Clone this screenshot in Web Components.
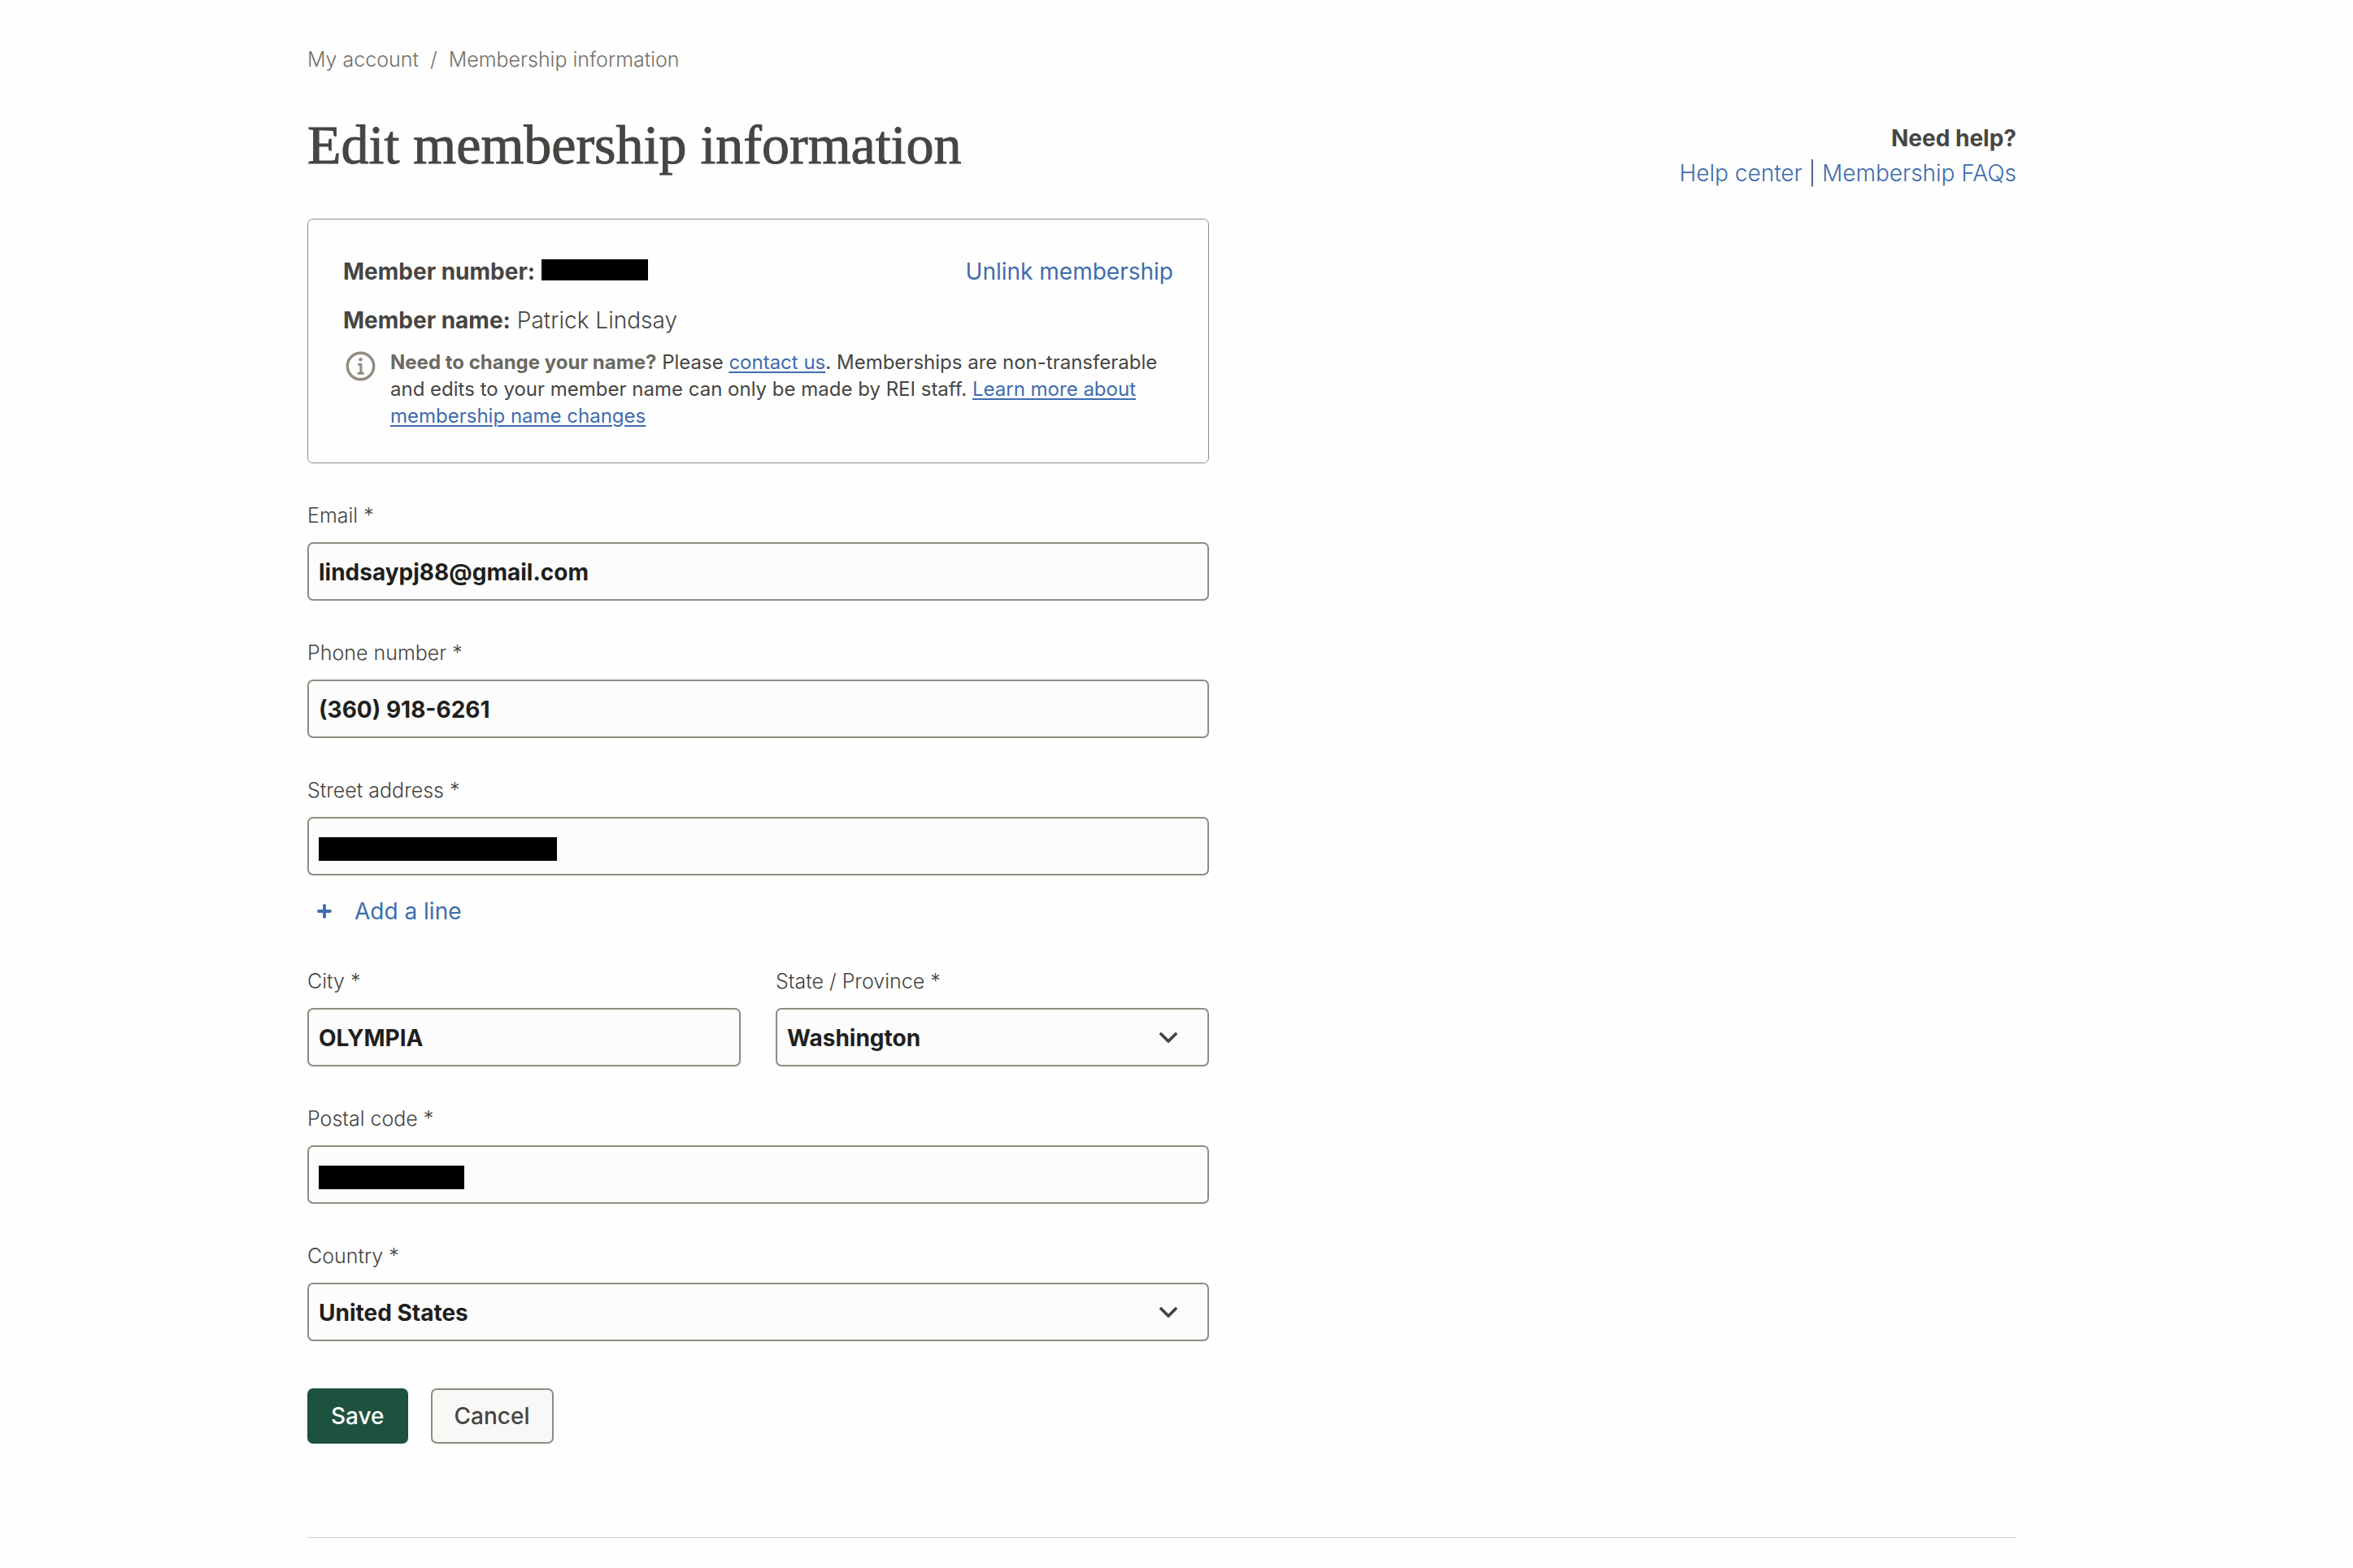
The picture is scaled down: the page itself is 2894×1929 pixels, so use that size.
<!DOCTYPE html>
<html lang="en">
<head>
<meta charset="utf-8">
<meta name="viewport" content="width=device-width, initial-scale=1">
<title>Edit membership information</title>
<style>
  :root {
    --sans: Inter, "Liberation Sans", sans-serif;
    --serif: "Liberation Serif", serif;
    --ink: #464542;
    --ink-strong: #1f1f1d;
    --muted: #73716a;
    --line: #928b80;
    --link: #3f6cae;
    --note: 24px;
    --small: 25px;
    --base: 28px;
  }
  body { margin: 0; background: #fefefe; color: var(--ink); font-family: var(--sans); font-size: var(--base); font-weight: 300; }
</style>
</head>
<body>
<membership-page></membership-page>

<script>
const define = (name, html, setup) => {
  const template = document.createElement('template');
  template.innerHTML = html.trim();
  customElements.define(name, class extends HTMLElement {
    constructor() {
      super();
      this.attachShadow({ mode: 'open' }).append(template.content.cloneNode(true));
    }
    connectedCallback() { if (setup) setup(this, this.shadowRoot); }
  });
};

const fieldStyles = `
  :host { display: block; min-width: 0; }
  .field { display: flex; flex-direction: column; gap: 15px; }
  label { font-size: var(--small); line-height: 36px; }
  input, select {
    box-sizing: border-box; width: 100%; height: 72px; margin: 0; padding: 2px 12px 0;
    border: 2px solid var(--line); border-radius: 7px;
    background-color: #fcfcfc; color: var(--ink-strong);
    font-family: inherit; font-size: var(--base); font-weight: 700;
  }`;

define('crumb-trail', `
  <style>
    :host { display: block; }
    nav { display: flex; gap: 14px; font-size: var(--small); line-height: 36px; color: var(--muted); }
    a { color: inherit; text-decoration: none; }
  </style>
  <nav aria-label="Breadcrumb"><a href="#account">My account</a><span>/</span><a href="#membership">Membership information</a></nav>
`);

define('page-heading', `
  <style>
    :host { display: flex; justify-content: space-between; align-items: flex-start; }
    h1 { margin: 0; font-family: var(--serif); font-size: 68px; line-height: 82px; font-weight: 400; -webkit-text-stroke: 1px currentColor; }
    .help { padding-top: 12px; text-align: right; line-height: 43px; }
    strong { font-weight: 700; }
  </style>
  <h1><slot></slot></h1>
  <div class="help"><strong>Need help?</strong><div><slot name="links"></slot></div></div>
`);

define('text-link', `<style>
    a { color: var(--link); text-decoration: none; }
    :host([underlined]) a { text-decoration: underline; text-decoration-thickness: 2px; text-underline-offset: 3px; }
  </style><a href="#"><slot></slot></a>`, (host, root) => {
  root.querySelector('a').href = host.getAttribute('href') || '#';
});

define('membership-card', `
  <style>
    :host { display: flex; flex-direction: column; border: 1px solid var(--line); border-radius: 7px; padding: 44px 43px 41px; line-height: 40px; }
    .row { display: flex; justify-content: space-between; margin-bottom: 20px; }
    .row text-link { font-weight: 400; }
    .number { display: flex; align-items: flex-start; gap: 8px; }
    .redacted { width: 131px; height: 26px; margin-top: 5px; background: #000; }
    strong { font-weight: 700; }
    .note { display: flex; gap: 15px; margin-top: 15px; font-size: var(--note); font-weight: 400; line-height: 33px; }
    .note strong { color: #6b6961; }
    .note p { margin: 0; }
    svg { flex: none; width: 43px; height: 43px; }
  </style>
  <div class="row">
    <div class="number"><strong>Member number:</strong><span class="redacted"></span></div>
    <text-link href="#unlink">Unlink membership</text-link>
  </div>
  <div><strong>Member name:</strong> <slot name="name"></slot></div>
  <div class="note">
    <svg viewBox="0 0 43 43" fill="none" stroke="#928b80" stroke-width="3.4" stroke-linecap="round" stroke-linejoin="round" aria-hidden="true">
      <circle cx="21.5" cy="21.5" r="16.2"/>
      <path d="M19.3 19.3h2.6v11M18.9 30.3h5.6" stroke-width="3"/>
      <circle cx="21.5" cy="13.2" r="2.2" fill="#928b80" stroke="none"/>
    </svg>
    <p><strong>Need to change your name?</strong> Please <text-link underlined href="#contact">contact us</text-link>. Memberships are non-transferable and edits to your member name can only be made by REI staff. <text-link underlined href="#name-changes">Learn more about membership name changes</text-link></p>
  </div>
`);

define('text-field', `
  <style>${fieldStyles}
    :host([redacted]) input { background-image: linear-gradient(#000, #000); background-repeat: no-repeat; background-position: 12px 23px; background-size: var(--redacted-width) 29px; }
  </style>
  <div class="field"><label for="control"></label><input id="control" type="text"></div>
`, (host, root) => {
  root.querySelector('label').textContent = host.getAttribute('label') + ' *';
  const input = root.querySelector('input');
  input.type = host.getAttribute('type') || 'text';
  input.value = host.getAttribute('value') || '';
});

define('select-field', `
  <style>${fieldStyles}
    .control { display: grid; align-items: center; }
    select, svg { grid-area: 1 / 1; }
    select { appearance: none; }
    svg { justify-self: end; width: 30px; height: 30px; margin-right: 35px; pointer-events: none; }
  </style>
  <div class="field"><label for="control"></label>
    <div class="control">
      <select id="control"></select>
      <svg viewBox="0 0 30 30" fill="none" stroke="#464542" stroke-width="3.8" stroke-linecap="round" stroke-linejoin="round" aria-hidden="true"><path d="M6 11l9 9 9-9"/></svg>
    </div>
  </div>
`, (host, root) => {
  root.querySelector('label').textContent = host.getAttribute('label') + ' *';
  root.querySelector('select').replaceChildren(new Option(host.getAttribute('value')));
});

define('add-line', `
  <style>
    :host { display: block; }
    button { display: flex; align-items: center; gap: 22px; margin: 0; padding: 0 6px; border: 0; background: none; color: var(--link); font: inherit; font-weight: 400; line-height: 40px; cursor: pointer; }
    svg { width: 30px; height: 30px; }
  </style>
  <button type="button"><svg viewBox="0 0 30 30" fill="none" stroke="#3f6cae" stroke-width="3.8" stroke-linecap="round" aria-hidden="true"><path d="M15 8v14M8 15h14"/></svg><slot></slot></button>
`);

define('action-button', `
  <style>
    :host { display: block; }
    button { box-sizing: border-box; height: 68px; margin: 0; padding: 0 27px; border: 2px solid var(--line); border-radius: 7px; background: #f9f8f6; color: var(--ink); font: inherit; font-weight: 500; cursor: pointer; }
    :host([primary]) button { background: #1f513f; border-color: #1f513f; color: #fff; }
  </style>
  <button type="button"><slot></slot></button>
`);

define('membership-form', `
  <style>
    :host { display: block; max-width: 1109px; }
    form { display: flex; flex-direction: column; gap: 46px; }
    .street { display: flex; flex-direction: column; gap: 24px; }
    .pair { display: grid; grid-template-columns: 1fr 1fr; gap: 43px; padding-top: 2px; }
    .actions { display: flex; gap: 28px; padding-top: 12px; }
  </style>
  <form>
    <membership-card><span slot="name">Patrick Lindsay</span></membership-card>
    <text-field label="Email" type="email" value="lindsaypj88@gmail.com"></text-field>
    <text-field label="Phone number" type="tel" value="(360) 918-6261"></text-field>
    <div class="street">
      <text-field label="Street address" redacted style="--redacted-width: 293px"></text-field>
      <add-line>Add a line</add-line>
    </div>
    <div class="pair">
      <text-field label="City" value="OLYMPIA"></text-field>
      <select-field label="State / Province" value="Washington"></select-field>
    </div>
    <text-field label="Postal code" redacted style="--redacted-width: 179px"></text-field>
    <select-field label="Country" value="United States"></select-field>
    <div class="actions">
      <action-button primary>Save</action-button>
      <action-button>Cancel</action-button>
    </div>
  </form>
`);

define('membership-page', `
  <style>
    :host { display: block; padding: 55px 36px 36px 0; }
    main { max-width: 2102px; margin: 0 auto; }
    page-heading { margin: 46px 0 34px; }
    hr { margin: 115px 0 0; border: 0; border-top: 1px solid #d5d4d0; }
  </style>
  <main>
    <crumb-trail></crumb-trail>
    <page-heading>Edit membership information<span slot="links"><text-link href="#help">Help center</text-link> | <text-link href="#faqs">Membership FAQs</text-link></span></page-heading>
    <membership-form></membership-form>
    <hr>
  </main>
`);
</script>
</body>
</html>
